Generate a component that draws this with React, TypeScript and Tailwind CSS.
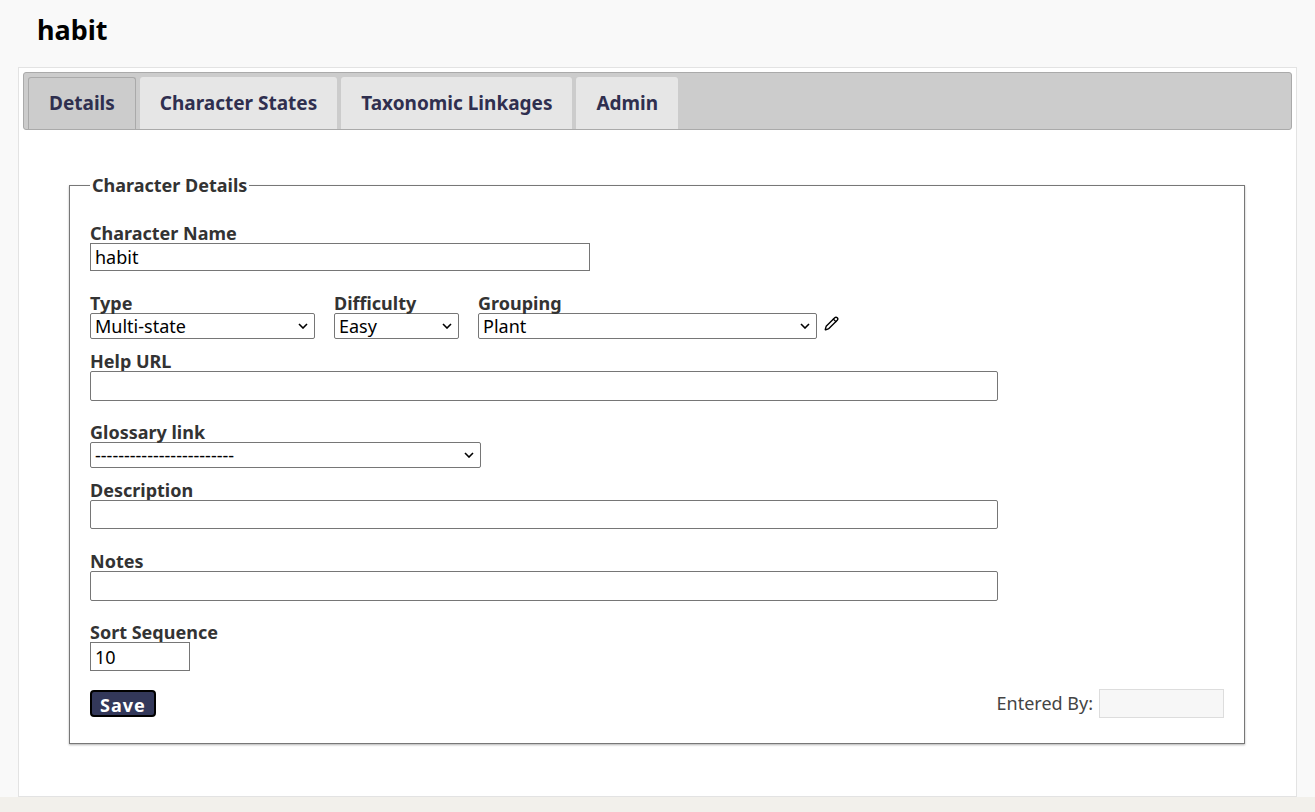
import { Pencil } from 'lucide-react'

const label = 'block text-[18px] font-bold leading-[20px] text-[#333]'
const box = 'border border-[#767676] bg-white px-[4px] text-[18px] text-black outline-none'

function Select({ value, width }: { value: string; width: string }) {
  return (
    <div className={`flex h-[26px] items-center justify-between rounded-[2px] ${box} ${width}`}>
      <span>{value}</span>
      <svg viewBox="0 0 10 6" className="mr-[2px] h-[6px] w-[10px]">
        <path d="M1 1 L5 5 L9 1" fill="none" stroke="#000" strokeWidth="1.6" />
      </svg>
    </div>
  )
}

export default function App() {
  const tabs = ['Details', 'Character States', 'Taxonomic Linkages', 'Admin']
  return (
    <div className="min-h-[812px] bg-[#f9f9f9] font-['Liberation_Sans',Arial,sans-serif]">
      <h1 className="pl-[37px] pt-[14px] text-[27px] font-bold leading-[32px] text-black">habit</h1>
      <div className="ml-[18px] mr-[18px] mt-[21px] h-[730px] border border-[#e3e3e3] bg-white p-[4px]">
        <div className="flex h-[58px] items-end gap-[4px] rounded-[3px] border border-[#aaa] bg-[#cccccc] pl-[4px]">
          {tabs.map((t, i) => (
            <div
              key={t}
              className={`flex h-[52px] items-center rounded-t-[3px] px-[20px] text-[19px] font-bold text-[#2f2f4f] ${
                i === 0 ? 'border border-b-0 border-[#aaa] bg-[#cccccc]' : 'bg-[#e6e6e6]'
              }`}
            >
              {t}
            </div>
          ))}
        </div>
        <fieldset className="ml-[46px] mr-[47px] mt-[42px] h-[572px] border border-[#777] px-[20px] shadow-[0_1px_2px_rgba(0,0,0,0.3)]">
          <legend className="px-[2px] text-[18px] font-bold text-[#333]">Character Details</legend>
          <div className="mt-[24px]">
            <span className={label}>Character Name</span>
            <input readOnly value="habit" className={`h-[28px] w-[500px] ${box}`} />
          </div>
          <div className="mt-[22px] flex items-end gap-[19px]">
            <div>
              <span className={label}>Type</span>
              <Select value="Multi-state" width="w-[225px]" />
            </div>
            <div>
              <span className={label}>Difficulty</span>
              <Select value="Easy" width="w-[125px]" />
            </div>
            <div className="flex items-end gap-[7px]">
              <div>
                <span className={label}>Grouping</span>
                <Select value="Plant" width="w-[339px]" />
              </div>
              <Pencil className="mb-[8px] h-[15px] w-[15px] text-black" strokeWidth={2.2} />
            </div>
          </div>
          <div className="mt-[12px]">
            <span className={label}>Help URL</span>
            <input readOnly className={`h-[30px] w-[908px] rounded-[2px] ${box}`} />
          </div>
          <div className="mt-[21px]">
            <span className={label}>Glossary link</span>
            <Select value="------------------------" width="w-[391px]" />
          </div>
          <div className="mt-[12px]">
            <span className={label}>Description</span>
            <input readOnly className={`h-[29px] w-[908px] rounded-[2px] ${box}`} />
          </div>
          <div className="mt-[22px]">
            <span className={label}>Notes</span>
            <input readOnly className={`h-[30px] w-[908px] rounded-[2px] ${box}`} />
          </div>
          <div className="mt-[21px]">
            <span className={label}>Sort Sequence</span>
            <input readOnly value="10" className={`h-[29px] w-[100px] ${box}`} />
          </div>
          <div className="mt-[18px] flex items-center justify-between">
            <button className="h-[27px] rounded-[4px] border-2 border-black bg-[#33385a] px-[8px] text-[18px] font-bold tracking-[1px] text-white">
              Save
            </button>
            <div className="flex items-center gap-[6px] text-[18px] text-[#444]">
              Entered By:
              <div className="h-[29px] w-[125px] border border-[#ddd] bg-[#f7f7f7]" />
            </div>
          </div>
        </fieldset>
      </div>
      <div className="h-[15px] bg-[#f2f0eb]" />
    </div>
  )
}
